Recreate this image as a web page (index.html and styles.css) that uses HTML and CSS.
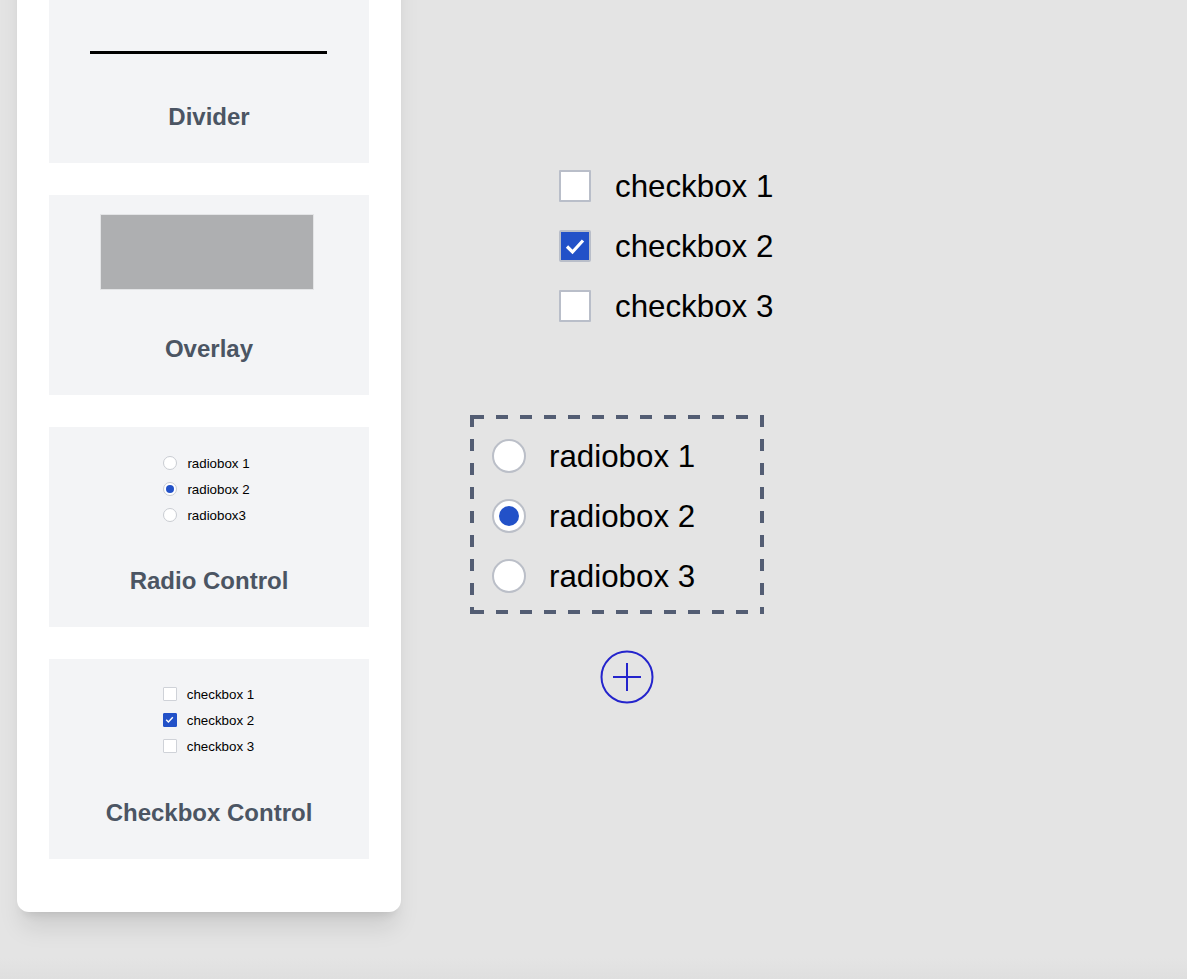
FILE: index.html
```html
<!DOCTYPE html>
<html lang="en">
<head>
<meta charset="utf-8">
<title>Controls</title>
<link rel="stylesheet" href="styles.css">
</head>
<body>
<div class="page">
  <aside class="panel">
    <div class="card">
      <div class="preview preview-divider"><div class="divider-line"></div></div>
      <div class="card-title">Divider</div>
    </div>
    <div class="card">
      <div class="preview preview-overlay"><div class="overlay-box"></div></div>
      <div class="card-title">Overlay</div>
    </div>
    <div class="card">
      <div class="preview preview-list">
        <div class="mini-row"><span class="mini-radio"></span><span class="mini-label">radiobox 1</span></div>
        <div class="mini-row"><span class="mini-radio is-on"></span><span class="mini-label">radiobox 2</span></div>
        <div class="mini-row"><span class="mini-radio"></span><span class="mini-label">radiobox3</span></div>
      </div>
      <div class="card-title">Radio Control</div>
    </div>
    <div class="card">
      <div class="preview preview-list preview-check">
        <div class="mini-row"><span class="mini-check"></span><span class="mini-label">checkbox 1</span></div>
        <div class="mini-row"><span class="mini-check is-on"><svg viewBox="0 0 13 13" width="13" height="13"><path d="M3.2 6.8 L5.4 9 L9.8 4.2" fill="none" stroke="#fff" stroke-width="1.4"/></svg></span><span class="mini-label">checkbox 2</span></div>
        <div class="mini-row"><span class="mini-check"></span><span class="mini-label">checkbox 3</span></div>
      </div>
      <div class="card-title">Checkbox Control</div>
    </div>
  </aside>

  <main class="canvas">
    <div class="widget checkbox-group">
      <div class="big-row"><span class="big-check"></span><span class="big-label">checkbox 1</span></div>
      <div class="big-row"><span class="big-check is-on"><svg viewBox="0 0 32 32" width="32" height="32"><path d="M8 16.5 L13.5 22 L24 10.5" fill="none" stroke="#fff" stroke-width="3.2"/></svg></span><span class="big-label">checkbox 2</span></div>
      <div class="big-row"><span class="big-check"></span><span class="big-label">checkbox 3</span></div>
    </div>

    <div class="widget radio-group">
      <div class="big-row"><span class="big-radio"></span><span class="big-label radio-label">radiobox 1</span></div>
      <div class="big-row"><span class="big-radio is-on"></span><span class="big-label radio-label">radiobox 2</span></div>
      <div class="big-row"><span class="big-radio"></span><span class="big-label radio-label">radiobox 3</span></div>
    </div>

    <div class="widget add-button">
      <svg viewBox="0 0 54 54" width="54" height="54">
        <circle cx="27" cy="27" r="25.5" fill="none" stroke="#2424cc" stroke-width="2"/>
        <path d="M13 27 H41 M27 13 V41" stroke="#2424cc" stroke-width="2"/>
      </svg>
    </div>
  </main>
</div>
</body>
</html>
```

FILE: styles.css
```css
* { box-sizing: border-box; }

html, body {
  margin: 0;
  padding: 0;
}

body {
  width: 1187px;
  height: 979px;
  overflow: hidden;
  background: linear-gradient(#e4e4e4 0, #e4e4e4 958px, #dfdfdf 979px);
  font-family: "Liberation Sans", Arial, Helvetica, sans-serif;
  color: #000;
}

.page {
  display: flex;
  align-items: flex-start;
}

.panel {
  margin-top: -69px;
  margin-left: 17px;
  width: 384px;
  padding: 32px 32px 53px;
  background: #fff;
  border-radius: 0 0 12px 12px;
  box-shadow: 0 20px 25px -5px rgba(0, 0, 0, 0.1), 0 8px 10px -6px rgba(0, 0, 0, 0.1);
  display: flex;
  flex-direction: column;
  gap: 32px;
}

.card {
  width: 320px;
  height: 200px;
  background: #f3f4f6;
  display: flex;
  flex-direction: column;
  align-items: center;
}

.preview {
  display: flex;
  flex-direction: column;
  align-items: center;
}

.preview-divider { padding-top: 88px; }
.divider-line {
  width: 237px;
  height: 3px;
  background: #000;
  margin-right: 1px;
}

.preview-overlay { padding-top: 19px; }
.overlay-box {
  width: 214px;
  height: 76px;
  background: #aeafb1;
  border: 1px solid #e3e4e6;
  margin-right: 5px;
}

.preview-list {
  padding-top: 23px;
  align-items: flex-start;
  margin-left: -5px;
}
.preview-check { padding-top: 22px; margin-left: -1px; }

.mini-row {
  height: 26px;
  display: flex;
  align-items: center;
  gap: 10px;
}

.mini-label {
  font-size: 13.333px;
  line-height: 16px;
  color: #000;
  padding-top: 1px;
}

.mini-radio {
  width: 14px;
  height: 14px;
  border-radius: 50%;
  border: 1px solid #c9ccd2;
  background: #fff;
  position: relative;
}
.mini-radio.is-on::after {
  content: "";
  position: absolute;
  left: 2px;
  top: 2px;
  width: 8px;
  height: 8px;
  border-radius: 50%;
  background: #2251c8;
}

.mini-check {
  width: 14px;
  height: 14px;
  border: 1px solid #cfd2d8;
  background: #fff;
  display: flex;
  border-radius: 1px;
}
.mini-check.is-on {
  background: #2251c8;
  border-color: #2251c8;
  overflow: hidden;
}
.mini-check svg { margin: -1px; }

.card-title {
  margin-top: auto;
  padding-bottom: 32px;
  font-size: 24px;
  line-height: 28px;
  font-weight: 700;
  color: #4b5563;
}

.canvas {
  position: relative;
  flex: 1;
  height: 979px;
}

.widget { position: absolute; }

.checkbox-group {
  left: 158px;
  top: 156px;
  display: flex;
  flex-direction: column;
}

.big-row {
  height: 60px;
  display: flex;
  align-items: center;
}

.big-label {
  font-size: 31.3px;
  line-height: 36px;
  color: #000;
  margin-left: 24px;
  padding-top: 2px;
}
.radio-label { margin-left: 23px; }

.big-check {
  width: 32px;
  height: 32px;
  border: 2px solid #b9bec9;
  background: #fff;
  border-radius: 1px;
  display: flex;
  overflow: hidden;
}
.big-check.is-on {
  background: #2251c8;
  border-color: #b9bec9;
  border-radius: 2px;
}
.big-check svg { margin: -2px; flex: none; }

.radio-group {
  --dash: #535d73;
  left: 69px;
  top: 415px;
  width: 294px;
  height: 199px;
  padding: 11px 0 0 22px;
  display: flex;
  flex-direction: column;
  background:
    repeating-linear-gradient(90deg, transparent 0 1.7px, var(--dash) 1.7px 14.3px, transparent 14.3px 24px) left top / 100% 4px no-repeat,
    repeating-linear-gradient(90deg, transparent 0 1.7px, var(--dash) 1.7px 14.3px, transparent 14.3px 24px) left bottom / 100% 4px no-repeat,
    repeating-linear-gradient(180deg, var(--dash) 0 12.3px, transparent 12.3px 24px) left top / 4px 100% no-repeat,
    repeating-linear-gradient(180deg, var(--dash) 0 12.3px, transparent 12.3px 24px) right top / 4px 100% no-repeat;
}

.big-radio {
  width: 34px;
  height: 34px;
  border-radius: 50%;
  border: 2px solid #bbbfc8;
  background: #fff;
  position: relative;
  flex: none;
}
.big-radio.is-on::after {
  content: "";
  position: absolute;
  left: 5px;
  top: 5px;
  width: 20px;
  height: 20px;
  border-radius: 50%;
  background: #2251c8;
}

.add-button {
  left: 199px;
  top: 650px;
  width: 54px;
  height: 54px;
  display: flex;
}
```
